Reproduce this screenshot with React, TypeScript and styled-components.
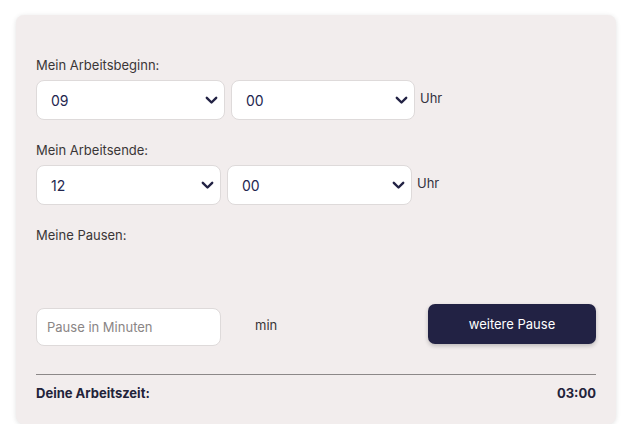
import React from "react";
import styled, { createGlobalStyle } from "styled-components";

const Global = createGlobalStyle`
  html, body { margin: 0; padding: 0; background: #ffffff; }
  body { font-family: Inter, "Noto Sans", sans-serif; }
  * { box-sizing: border-box; }
`;

const Card = styled.div`
  margin: 15px 0 0 16px;
  width: 600px;
  height: 409px;
  background: #f2eded;
  border-radius: 8px;
  box-shadow: 0 1px 5px rgba(0, 0, 0, 0.12);
  padding: 42px 20px 0 20px;
  display: flex;
  flex-direction: column;
`;

const Label = styled.div`
  font-size: 13px;
  line-height: 17px;
  color: #3a3637;
  margin-bottom: 6px;
`;

const FieldRow = styled.div`
  display: flex;
  align-items: flex-start;
  gap: 6px;
  margin-bottom: 22px;
`;

const SelectWrap = styled.div<{ $w: number }>`
  position: relative;
  width: ${(p) => p.$w}px;
  height: 40px;
`;

const Select = styled.select`
  appearance: none;
  -webkit-appearance: none;
  width: 100%;
  height: 100%;
  border: 1px solid #dedada;
  border-radius: 8px;
  background: #ffffff;
  padding: 0 0 0 14px;
  font-family: Inter, "Noto Sans", sans-serif;
  font-size: 14px;
  color: #23264f;
  outline: none;
`;

const Chevron = styled.svg`
  position: absolute;
  right: 7px;
  top: 16px;
  width: 13px;
  height: 9px;
  pointer-events: none;
`;

const Unit = styled.span`
  font-size: 13px;
  color: #34323f;
  margin-top: 10px;
  margin-left: -1px;
`;

const Spacer = styled.div`
  height: 54px;
`;

const PauseRow = styled.div`
  display: flex;
  align-items: flex-start;
`;

const PauseInput = styled.input`
  width: 185px;
  height: 38px;
  margin-top: 4px;
  border: 1px solid #dedada;
  border-radius: 8px;
  background: #ffffff;
  padding: 0 10px;
  font-family: Inter, "Noto Sans", sans-serif;
  font-size: 13px;
  color: #333;
  outline: none;
  &::placeholder { color: #8a8585; }
`;

const Min = styled.span`
  font-size: 13px;
  color: #3a3637;
  margin-left: 34px;
  margin-top: 13px;
`;

const Button = styled.button`
  margin-left: auto;
  width: 168px;
  height: 40px;
  border: none;
  border-radius: 7px;
  background: #222244;
  color: #ffffff;
  font-family: Inter, "Noto Sans", sans-serif;
  font-size: 13px;
  box-shadow: 0 2px 4px rgba(0, 0, 0, 0.22);
  cursor: pointer;
`;

const Divider = styled.hr`
  border: none;
  border-top: 1px solid #8c8888;
  margin: 28px 0 0 0;
  height: 0;
`;

const TotalRow = styled.div`
  display: flex;
  justify-content: space-between;
  margin-top: 10px;
  font-size: 13px;
  line-height: 16px;
  font-weight: 700;
  color: #22233a;
`;

const ChevronIcon = () => (
  <Chevron viewBox="0 0 13 9">
    <path d="M1.8 1.8 L6.5 6.5 L11.2 1.8" fill="none" stroke="#222244" strokeWidth="2.4" strokeLinecap="round" strokeLinejoin="round" />
  </Chevron>
);

const TimeSelect = ({ w, value, options }: { w: number; value: string; options: string[] }) => (
  <SelectWrap $w={w}>
    <Select defaultValue={value}>
      {options.map((o) => (
        <option key={o} value={o}>{o}</option>
      ))}
    </Select>
    <ChevronIcon />
  </SelectWrap>
);

const hours = Array.from({ length: 24 }, (_, i) => String(i).padStart(2, "0"));
const mins = ["00", "15", "30", "45"];

export default function App() {
  return (
    <>
      <Global />
      <Card>
        <Label>Mein Arbeitsbeginn:</Label>
        <FieldRow>
          <TimeSelect w={189} value="09" options={hours} />
          <TimeSelect w={184} value="00" options={mins} />
          <Unit>Uhr</Unit>
        </FieldRow>
        <Label>Mein Arbeitsende:</Label>
        <FieldRow>
          <TimeSelect w={185} value="12" options={hours} />
          <TimeSelect w={185} value="00" options={mins} />
          <Unit>Uhr</Unit>
        </FieldRow>
        <Label>Meine Pausen:</Label>
        <Spacer />
        <PauseRow>
          <PauseInput placeholder="Pause in Minuten" />
          <Min>min</Min>
          <Button>weitere Pause</Button>
        </PauseRow>
        <Divider />
        <TotalRow>
          <span>Deine Arbeitszeit:</span>
          <span>03:00</span>
        </TotalRow>
      </Card>
    </>
  );
}
